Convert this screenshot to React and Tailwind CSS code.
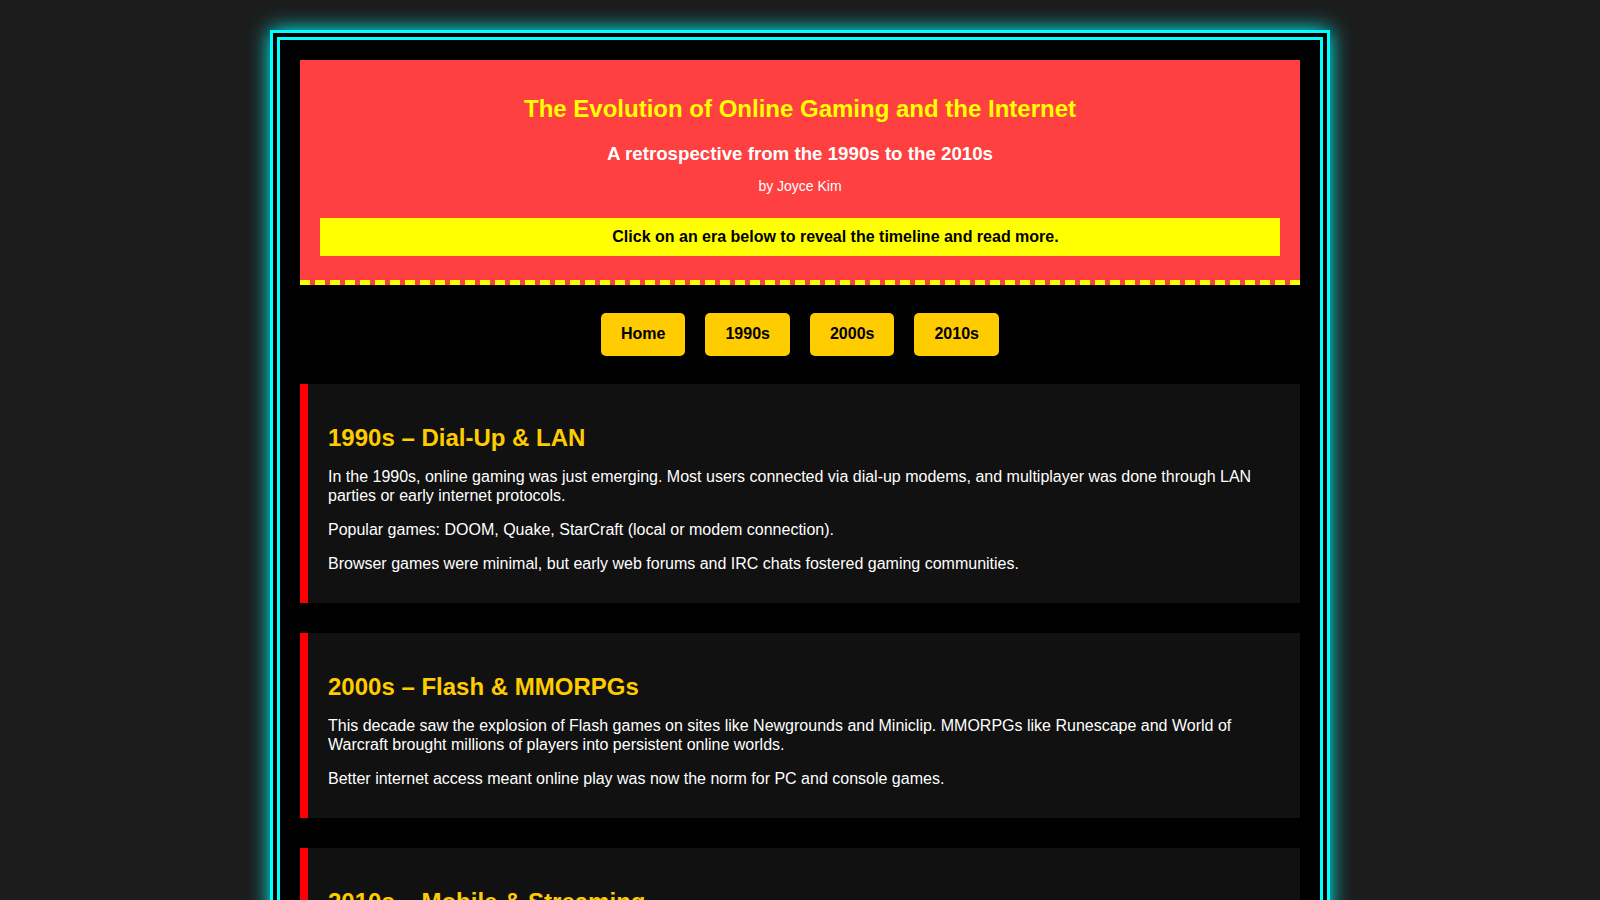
import React from "react";

const eras = [
  {
    title: "1990s – Dial-Up & LAN",
    paras: [
      "In the 1990s, online gaming was just emerging. Most users connected via dial-up modems, and multiplayer was done through LAN parties or early internet protocols.",
      "Popular games: DOOM, Quake, StarCraft (local or modem connection).",
      "Browser games were minimal, but early web forums and IRC chats fostered gaming communities.",
    ],
  },
  {
    title: "2000s – Flash & MMORPGs",
    paras: [
      "This decade saw the explosion of Flash games on sites like Newgrounds and Miniclip. MMORPGs like Runescape and World of Warcraft brought millions of players into persistent online worlds.",
      "Better internet access meant online play was now the norm for PC and console games.",
    ],
  },
  {
    title: "2010s – Mobile & Streaming",
    paras: [
      "Smartphones turned everyone into a gamer. Mobile titles like Angry Birds and Clash of Clans reached huge audiences, while streaming platforms such as Twitch changed how people watched games.",
      "Esports grew into a global industry with packed arenas and millions of online viewers.",
    ],
  },
];

export default function App() {
  return (
    <div
      className="min-h-screen bg-[#1c1c1c] pt-[30px] pb-[30px]"
      style={{ fontFamily: '"Liberation Sans", Arial, sans-serif' }}
    >
      <div className="mx-auto w-[1060px] border-[10px] border-double border-[#00ffff] bg-black p-[20px] shadow-[0_0_20px_#00ffff]">
        <header className="bg-[#ff4040] px-[20px] pt-[35px] pb-[24px] text-center border-b-[5px] border-dashed border-[#ffff00]">
          <h1 className="text-[24px] font-bold leading-[27.6px] text-[#ffff00]">
            The Evolution of Online Gaming and the Internet
          </h1>
          <h2 className="mt-[20px] text-[18.72px] font-bold leading-[21.5px] text-white">
            A retrospective from the 1990s to the 2010s
          </h2>
          <p className="mt-[14px] text-[14px] leading-[16.1px] text-white">by Joyce Kim</p>
          <div className="mt-[24px] overflow-hidden bg-[#ffff00] py-[10px] pl-[71px] text-[16px] font-bold leading-[18px] text-black">
            Click on an era below to reveal the timeline and read more.
          </div>
        </header>

        <nav className="flex justify-center gap-[20px] py-[28px]">
          {["Home", "1990s", "2000s", "2010s"].map((b) => (
            <button
              key={b}
              className="rounded-[5px] bg-[#ffcc00] px-[20px] py-[12px] text-[16px] font-bold leading-[18.4px] text-black"
            >
              {b}
            </button>
          ))}
        </nav>

        <div className="flex flex-col gap-[30px]">
          {eras.map((e) => (
            <section
              key={e.title}
              className="border-l-[8px] border-[#ff0000] bg-[#111111] pl-[20px] pr-[20px] pt-[40px] pb-[29px]"
            >
              <h2 className="text-[24px] font-bold leading-[27.6px] text-[#ffcc00]">{e.title}</h2>
              <div className="mt-[17px] flex flex-col gap-[16px]">
                {e.paras.map((p, i) => (
                  <p key={i} className="text-[16px] leading-[18.4px] text-white">
                    {p}
                  </p>
                ))}
              </div>
            </section>
          ))}
        </div>
      </div>
    </div>
  );
}
